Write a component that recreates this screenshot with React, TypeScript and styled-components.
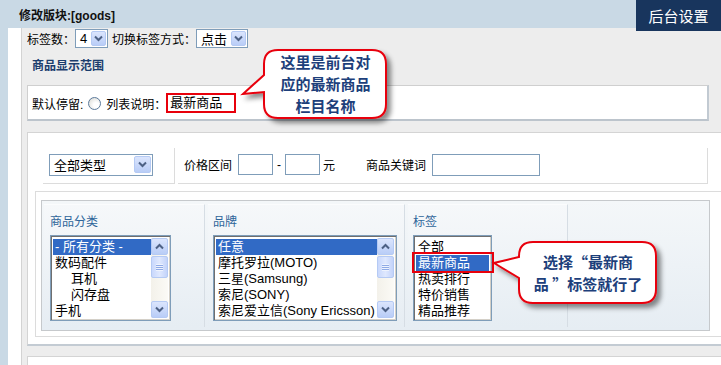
import styled, { createGlobalStyle } from "styled-components";

const GlobalStyle = createGlobalStyle`
  html, body { margin: 0; padding: 0; background: #ffffff; }
  body {
    font-family: "Liberation Sans", "Noto Sans CJK SC", sans-serif;
    font-size: 12px;
    color: #000;
  }
`;

const Page = styled.div`
  position: relative;
  width: 721px;
  height: 365px;
  overflow: hidden;
  display: flex;
  flex-direction: column;
`;

const TopBar = styled.div`
  height: 28px;
  flex-shrink: 0;
  background: #c9d9e5;
  display: flex;
  align-items: center;
  padding-left: 19px;
  font-weight: bold;
  font-size: 12px;
  color: #111;
`;

const AdminBadge = styled.div`
  position: absolute;
  top: 0;
  right: 0;
  width: 85px;
  height: 31px;
  background: #18355d;
  color: #fff;
  font-size: 15px;
  display: flex;
  align-items: center;
  justify-content: center;
  z-index: 2;
`;

const Body = styled.div`
  flex: 1;
  display: flex;
  min-height: 0;
`;

const SideStrip = styled.div`
  width: 8px;
  background: #c9d9e5;
`;

const Gutter = styled.div`
  width: 13px;
  background: #fff;
  border-right: 1px solid #d3d3d3;
`;

const Main = styled.div`
  flex: 1;
  min-width: 0;
  background: #ededed;
  padding-left: 5px;
  display: flex;
  flex-direction: column;
`;

const OptionsRow = styled.div`
  height: 20px;
  display: flex;
  align-items: center;
  font-size: 12px;
`;

const Label = styled.span<{ $ml?: number }>`
  margin-left: ${(p) => p.$ml ?? 0}px;
  white-space: nowrap;
`;

const Select = styled.div<{ $w: number; $h?: number; $ml?: number }>`
  width: ${(p) => p.$w}px;
  height: ${(p) => p.$h ?? 19}px;
  margin-left: ${(p) => p.$ml ?? 0}px;
  box-sizing: border-box;
  border: 1px solid #7f9db9;
  background: #fff;
  display: flex;
  align-items: center;
  justify-content: space-between;
  padding: 1px 1px 1px 4px;
  font-size: 13px;
`;

const ArrowButton = styled.span<{ $size?: number }>`
  width: ${(p) => p.$size ?? 15}px;
  height: ${(p) => p.$size ?? 15}px;
  box-sizing: border-box;
  border: 1px solid #b5caf4;
  border-radius: 2px;
  background: linear-gradient(#dbe5fd, #b9cdf7);
  display: flex;
  align-items: center;
  justify-content: center;
  flex-shrink: 0;
`;

const SectionTitle = styled.div`
  margin-top: 8px;
  height: 20px;
  line-height: 20px;
  padding-left: 5px;
  font-weight: bold;
  font-size: 12px;
  color: #1b3d6d;
`;

const StayBox = styled.div`
  margin-top: 9px;
  width: 682px;
  height: 36px;
  box-sizing: border-box;
  background: #fff;
  border-top: 1px solid #cfcfcf;
  border-left: 1px solid #cfcfcf;
  border-right: 2px solid #c2cad2;
  border-bottom: 2px solid #bcc4cc;
  display: flex;
  align-items: center;
  padding-left: 4px;
  padding-top: 1px;
`;

const Radio = styled.span`
  width: 13px;
  height: 13px;
  margin-left: 5px;
  border-radius: 50%;
  box-sizing: border-box;
  border: 1px solid #5b7a9b;
  background: radial-gradient(circle at 65% 65%, #ffffff 25%, #d6d6d0 100%);
`;

const TextInput = styled.div<{ $w: number; $h?: number; $ml?: number; $marked?: boolean }>`
  width: ${(p) => p.$w}px;
  height: ${(p) => p.$h ?? 21}px;
  margin-left: ${(p) => p.$ml ?? 0}px;
  box-sizing: border-box;
  border: ${(p) => (p.$marked ? "2px solid #e8000b" : "1px solid #7f9db9")};
  background: #fff;
  font-size: 13px;
  line-height: 16px;
  padding-left: 2px;
  display: flex;
  align-items: center;
`;

const SearchPanel = styled.div`
  margin-top: 11px;
  background: #fff;
  border-top: 1px solid #d4d4d4;
  border-left: 1px solid #d4d4d4;
  border-bottom: 2px solid #c3cbd3;
  padding: 15px 0 7px 7px;
`;

const FilterRow = styled.div`
  margin-left: 8px;
  width: 665px;
  height: 36px;
  display: flex;
  gap: 3px;
`;

const FilterCell = styled.div<{ $w?: number }>`
  ${(p) => (p.$w ? `width: ${p.$w}px;` : "flex: 1;")}
  box-sizing: border-box;
  border-right: 1px solid #dcdcdc;
  border-bottom: 1px solid #dcdcdc;
  display: flex;
  align-items: center;
  padding: 0 0 2px 6px;
  font-size: 12px;
`;

const InnerBox = styled.div`
  margin-top: 7px;
  border-top: 1px solid #dcdcdc;
  border-left: 1px solid #dcdcdc;
  border-bottom: 1px solid #dcdcdc;
  padding: 8px 0 5px 5px;
`;

const CategoryBox = styled.div`
  width: 669px;
  height: 131px;
  box-sizing: border-box;
  border: 1px solid #c6c9cc;
  background: linear-gradient(#f4f7f9, #e6edf3);
  padding: 3px 2px;
  display: flex;
  gap: 3px;
`;

const Column = styled.div<{ $w: number; $pl: number }>`
  width: ${(p) => p.$w}px;
  box-sizing: border-box;
  border-right: 1px solid #d6dde4;
  border-top: 1px solid #fbfcfd;
  background: linear-gradient(#f6f8fa, #e6edf3);
  padding: 9px 0 0 ${(p) => p.$pl}px;
`;

const ColumnTitle = styled.div`
  height: 16px;
  line-height: 16px;
  font-size: 12px;
  color: #2f659a;
  margin-bottom: 5px;
`;

const ListBox = styled.div<{ $w: number }>`
  width: ${(p) => p.$w}px;
  height: 86px;
  box-sizing: border-box;
  border: 1px solid #7f9db9;
  box-shadow: inset 1px 1px 0 #6f6f6f, inset -1px -1px 0 #d4d0c8;
  background: #fff;
  display: flex;
  padding: 2px;
  overflow: hidden;
`;

const Options = styled.div`
  flex: 1;
  min-width: 0;
  overflow: hidden;
  padding-top: 1px;
`;

const Option = styled.div<{ $selected?: boolean; $indent?: boolean }>`
  height: 16px;
  line-height: 16px;
  font-size: 13px;
  white-space: nowrap;
  padding-left: ${(p) => (p.$indent ? 18 : 2)}px;
  background: ${(p) => (p.$selected ? "#316ac5" : "transparent")};
  color: ${(p) => (p.$selected ? "#fff" : "#000")};
`;

const ScrollTrack = styled.div`
  width: 17px;
  display: flex;
  flex-direction: column;
  justify-content: space-between;
  background: linear-gradient(90deg, #f3f1ea, #fbfaf6);
  position: relative;
`;

const ScrollThumb = styled.div`
  position: absolute;
  left: 0;
  top: 18px;
  width: 17px;
  height: 22px;
  box-sizing: border-box;
  border: 1px solid #b5caf4;
  border-radius: 2px;
  background: linear-gradient(90deg, #c9d8fc, #dfe8fe 50%, #c3d3fa);
  display: flex;
  align-items: center;
  justify-content: center;
`;

const Grip = styled.span`
  width: 7px;
  height: 7px;
  background: repeating-linear-gradient(#eef3fe 0 1px, #8faae6 1px 2px);
`;

const Panel3 = styled.div`
  margin-top: 10px;
  flex: 1;
  background: #fff;
  border-top: 1px solid #d4d4d4;
  border-left: 1px solid #d4d4d4;
`;

const Overlay = styled.svg`
  position: absolute;
  left: 0;
  top: 0;
  pointer-events: none;
  z-index: 3;
`;

const BubbleText = styled.div<{ $x: number; $y: number; $w: number; $h: number; $lh: number }>`
  position: absolute;
  left: ${(p) => p.$x}px;
  top: ${(p) => p.$y}px;
  width: ${(p) => p.$w}px;
  height: ${(p) => p.$h}px;
  display: flex;
  flex-direction: column;
  align-items: center;
  justify-content: center;
  font-family: "Noto Sans CJK SC", "Liberation Sans", sans-serif;
  font-size: 15px;
  font-weight: bold;
  color: #1d3f7b;
  line-height: ${(p) => p.$lh}px;
  white-space: nowrap;
  z-index: 4;
`;

const Chevron = ({ up = false }: { up?: boolean }) => (
  <svg width="9" height="7" viewBox="0 0 9 7">
    <polyline
      points={up ? "1,5.5 4.5,2 8,5.5" : "1,1.5 4.5,5 8,1.5"}
      fill="none"
      stroke="#4d6185"
      strokeWidth="2"
    />
  </svg>
);

const Scrollbar = () => (
  <ScrollTrack>
    <ArrowButton $size={17}>
      <Chevron up />
    </ArrowButton>
    <ScrollThumb>
      <Grip />
    </ScrollThumb>
    <ArrowButton $size={17}>
      <Chevron />
    </ArrowButton>
  </ScrollTrack>
);

type Item = { text: string; selected?: boolean; indent?: boolean };

const categories: Item[] = [
  { text: "- 所有分类 -", selected: true },
  { text: "数码配件" },
  { text: "耳机", indent: true },
  { text: "闪存盘", indent: true },
  { text: "手机" },
];

const brands: Item[] = [
  { text: "任意", selected: true },
  { text: "摩托罗拉(MOTO)" },
  { text: "三星(Samsung)" },
  { text: "索尼(SONY)" },
  { text: "索尼爱立信(Sony Ericsson)" },
];

const tags: Item[] = [
  { text: "全部" },
  { text: "最新商品", selected: true },
  { text: "热卖排行" },
  { text: "特价销售" },
  { text: "精品推荐" },
];

const List = ({ items, width, scroll }: { items: Item[]; width: number; scroll?: boolean }) => (
  <ListBox $w={width}>
    <Options>
      {items.map((it) => (
        <Option key={it.text} $selected={it.selected} $indent={it.indent}>
          {it.text}
        </Option>
      ))}
    </Options>
    {scroll && <Scrollbar />}
  </ListBox>
);

const bubble1 =
  "M278 50 H372 Q386 50 386 64 V104 Q386 118 372 118 H278 Q264 118 264 104 V92 L243 94 L264 75 V64 Q264 50 278 50 Z";
const bubble2 =
  "M533 242 H642 Q656 242 656 256 V289 Q656 303 642 303 H533 Q519 303 519 289 V278 L494 263 L519 257 V256 Q519 242 533 242 Z";

export default function App() {
  return (
    <>
      <GlobalStyle />
      <Page>
        <TopBar>修改版块:[goods]</TopBar>
        <AdminBadge>后台设置</AdminBadge>
        <Body>
          <SideStrip />
          <Gutter />
          <Main>
            <OptionsRow>
              <Label>标签数：</Label>
              <Select $w={33}>
                4
                <ArrowButton>
                  <Chevron />
                </ArrowButton>
              </Select>
              <Label $ml={4}>切换标签方式：</Label>
              <Select $w={52}>
                点击
                <ArrowButton>
                  <Chevron />
                </ArrowButton>
              </Select>
            </OptionsRow>
            <SectionTitle>商品显示范围</SectionTitle>
            <StayBox>
              <Label>默认停留:</Label>
              <Radio />
              <Label $ml={5}>列表说明：</Label>
              <TextInput $w={70} $h={20} $marked>
                最新商品
              </TextInput>
            </StayBox>
            <SearchPanel>
              <FilterRow>
                <FilterCell $w={132}>
                  <Select $w={104} $h={22}>
                    全部类型
                    <ArrowButton $size={17}>
                      <Chevron />
                    </ArrowButton>
                  </Select>
                </FilterCell>
                <FilterCell>
                  <Label>价格区间</Label>
                  <TextInput $w={35} $ml={6} />
                  <Label $ml={4}>-</Label>
                  <TextInput $w={35} $ml={4} />
                  <Label $ml={3}>元</Label>
                  <Label $ml={31}>商品关键词</Label>
                  <TextInput $w={108} $h={22} $ml={6} />
                </FilterCell>
              </FilterRow>
              <InnerBox>
                <CategoryBox>
                  <Column $w={161} $pl={6}>
                    <ColumnTitle>商品分类</ColumnTitle>
                    <List items={categories} width={121} scroll />
                  </Column>
                  <Column $w={197} $pl={5}>
                    <ColumnTitle>品牌</ColumnTitle>
                    <List items={brands} width={184} scroll />
                  </Column>
                  <Column $w={160} $pl={5}>
                    <ColumnTitle>标签</ColumnTitle>
                    <List items={tags} width={79} />
                  </Column>
                </CategoryBox>
              </InnerBox>
            </SearchPanel>
            <Panel3 />
          </Main>
        </Body>

        <Overlay width="721" height="365" viewBox="0 0 721 365">
          <defs>
            <filter id="shade" x="-20%" y="-20%" width="150%" height="150%">
              <feDropShadow dx="4" dy="4" stdDeviation="2.5" floodColor="#000" floodOpacity="0.45" />
            </filter>
          </defs>
          <path d={bubble1} fill="#fff" stroke="#e8000b" strokeWidth="2" filter="url(#shade)" />
          <path d={bubble2} fill="#fff" stroke="#e8000b" strokeWidth="2" filter="url(#shade)" />
          <rect x="413" y="253" width="80" height="19" fill="none" stroke="#e8000b" strokeWidth="2" />
        </Overlay>
        <BubbleText $x={265} $y={50} $w={121} $h={68} $lh={22}>
          <span>这里是前台对</span>
          <span>应的最新商品</span>
          <span>栏目名称</span>
        </BubbleText>
        <BubbleText $x={520} $y={243} $w={136} $h={60} $lh={22}>
          <span>选择“最新商</span>
          <span>品 ”标签就行了</span>
        </BubbleText>
      </Page>
    </>
  );
}
